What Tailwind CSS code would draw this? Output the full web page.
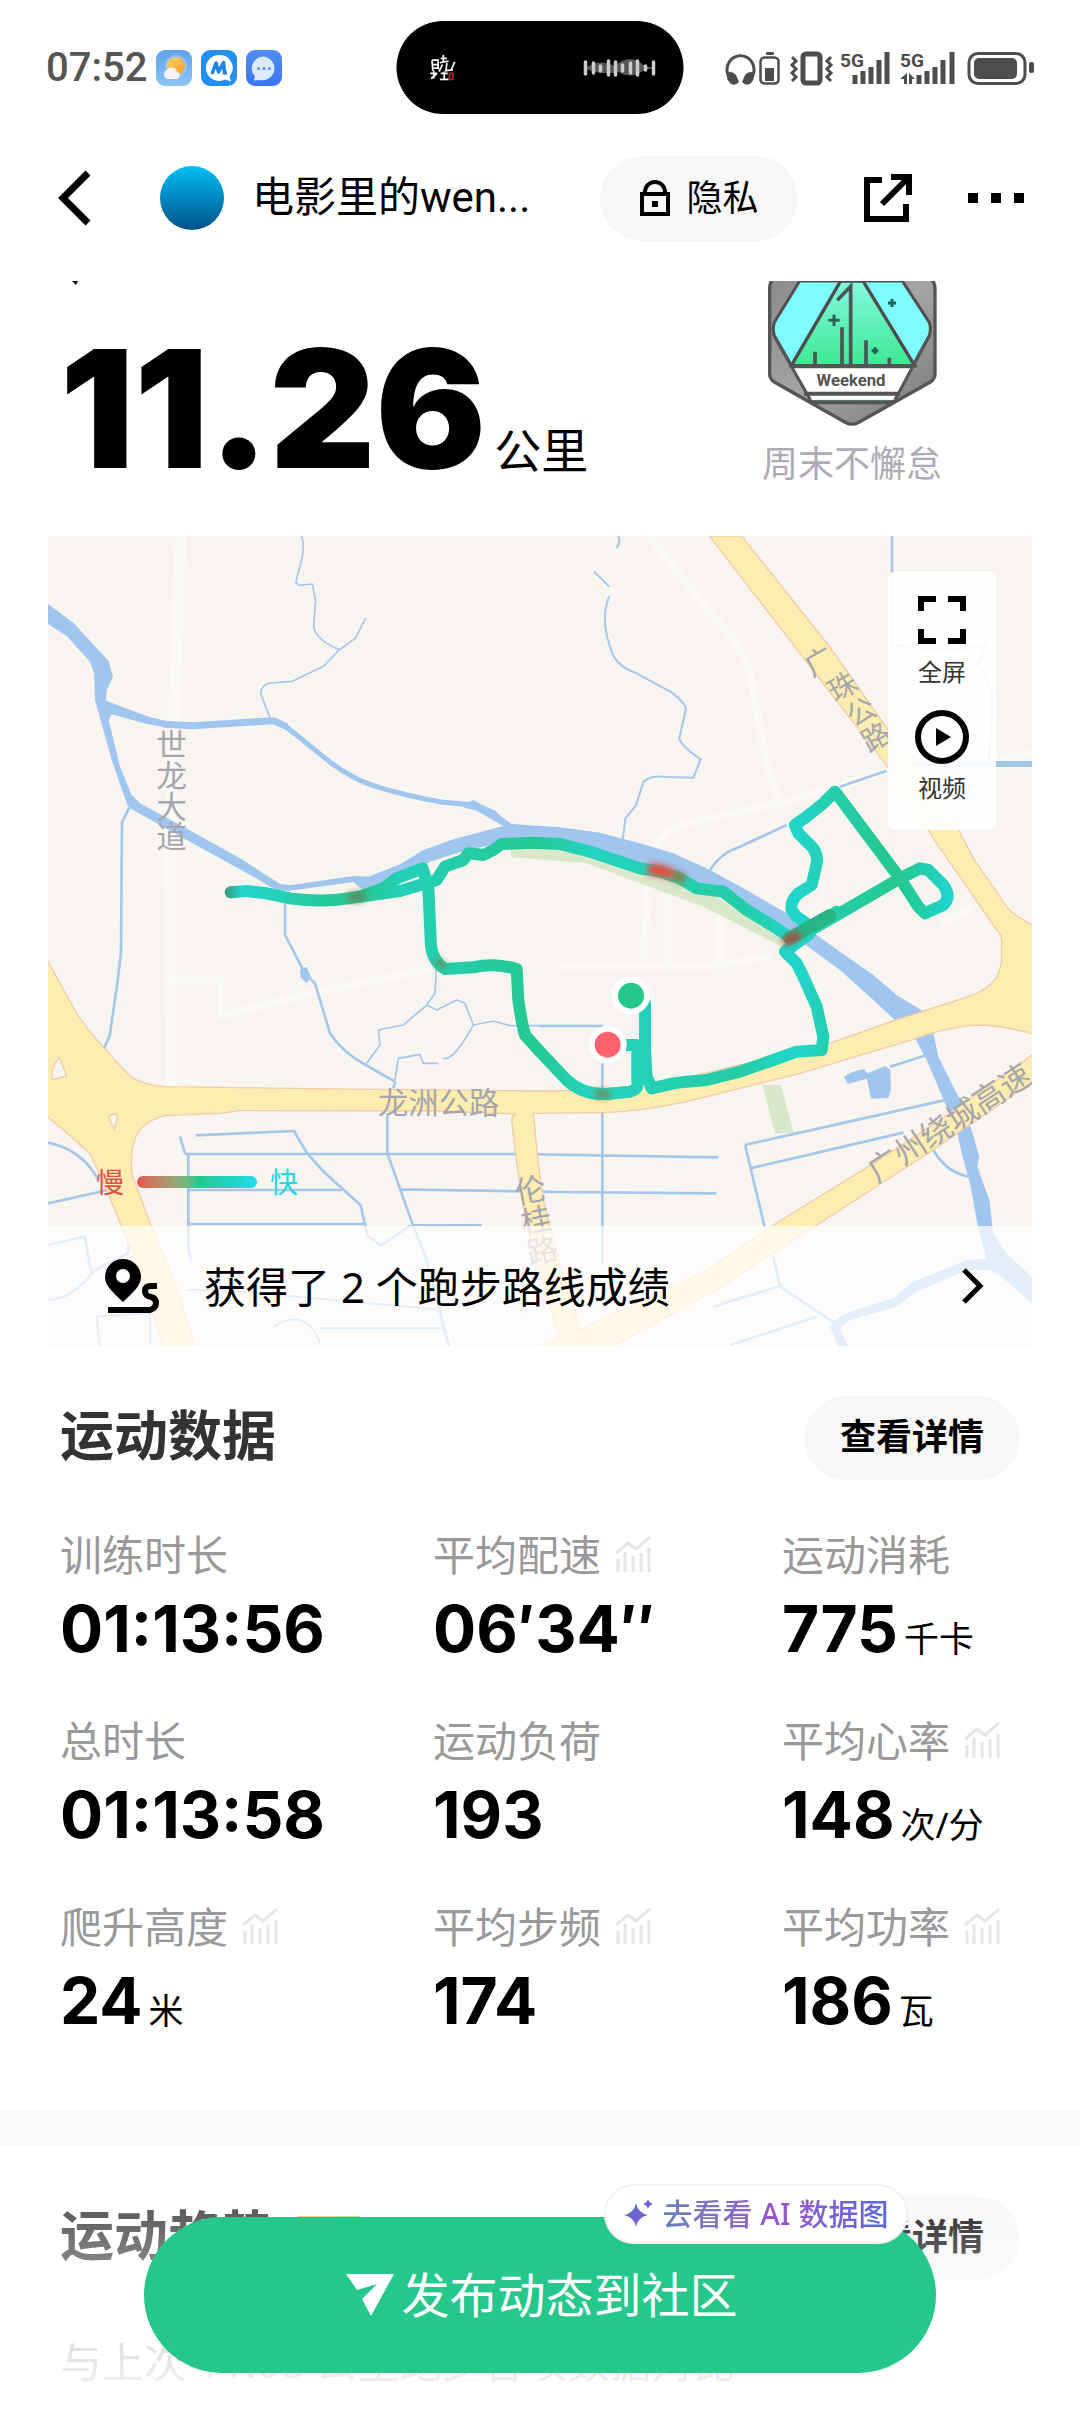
<!doctype html>
<html lang="zh-CN">

<head>
  <meta charset="UTF-8" />
  <meta name="viewport" content="width=device-width, initial-scale=1.0" />
  <title>运动数据</title>
  <script src="https://cdn.jsdelivr.net/npm/@tailwindcss/browser@4"></script>
</head>

<body class="bg-white text-black font-['Noto_Sans','Noto_Sans_CJK_SC',sans-serif]">
  <div class="relative flex h-screen flex-col overflow-hidden">

    <!-- Status bar -->
    <div class="relative flex h-[136px] shrink-0 items-center justify-between pr-[40px] pl-[46px]">
      <div class="flex items-center gap-[9px]">
        <span class="font-['Roboto'] text-[40px] leading-[48px] font-medium text-[#555]">07:52</span>
        <svg class="size-[36px]" viewBox="0 0 36 36">
          <defs>
            <linearGradient id="sky" x2="0" y2="1"><stop stop-color="#5fa3ec" /><stop offset="1" stop-color="#8cc4f7" /></linearGradient>
            <linearGradient id="sun" x2="1" y2="1"><stop stop-color="#ffd75e" /><stop offset="1" stop-color="#f79a2d" /></linearGradient>
          </defs>
          <rect width="36" height="36" rx="9" fill="url(#sky)" />
          <circle cx="20" cy="16" r="11" fill="#fff" opacity=".25" />
          <circle cx="20" cy="16" r="9" fill="url(#sun)" />
          <path d="M11 29a5 5 0 0 1-.5-9 6 6 0 0 1 10.500 1.500 4 4 0 0 1 .5 7.500z" fill="#f4f3f0" />
        </svg>
        <svg class="size-[36px]" viewBox="0 0 36 36">
          <rect width="36" height="36" rx="9" fill="#2490f5" />
          <path d="M18 5a13 13 0 1 0 6 24.500l6 2-1.500-5A13 13 0 0 0 18 5z" fill="#fff" />
          <path d="M11 24l4-11 2.500 9 5-9.500 1 10.500 2.500-.5" fill="none" stroke="#2383e2" stroke-width="3.500" stroke-linejoin="round" />
        </svg>
        <svg class="size-[36px]" viewBox="0 0 36 36">
          <defs><linearGradient id="sms" x2="0" y2="1"><stop stop-color="#4f8df5" /><stop offset="1" stop-color="#3a74f0" /></linearGradient></defs>
          <rect width="36" height="36" rx="9" fill="url(#sms)" />
          <path d="M18 6.500A12.500 12 0 1 1 13 30l-5.500.5 1.500-4A12.500 12 0 0 1 18 6.500z" fill="#dbeaff" />
          <circle cx="12.500" cy="18.500" r="1.500" fill="#5b8ff2" /><circle cx="18" cy="18.500" r="1.500" fill="#5b8ff2" /><circle cx="23.500" cy="18.500" r="1.500" fill="#5b8ff2" />
        </svg>
      </div>

      <div class="absolute top-[21px] left-1/2 flex h-[93px] w-[287px] -translate-x-1/2 items-center justify-between rounded-full bg-black pr-[27px] pl-[32px]">
        <svg class="h-[28px] w-[28px]" viewBox="0 0 32 32" fill="none" stroke="#fff" stroke-width="2">
          <path d="M4 7l1 12M4 7h7v10M5 12h5M6 16h5M14 5h7M17 1v9M13 10l10-2M16 12l-4 8M21 10l-1 9 8-1M30 9l-4 9M2 22h8M6 19v9M3 28l6-5M14 22h8M18 20v9M13 29h10" />
          <path d="M24 22h4v7h-4z" stroke="#a02828" />
        </svg>
        <svg class="h-[20px] w-[74px]" viewBox="0 0 74 20" stroke-linecap="round">
          <path d="M2 10Q18 0 32 8 48-6 62 8l10 2-10 2Q48 22 36 14 18 18 2 10z" fill="#555" />
          <path d="M3 4v12M11 5v10M18 8v5M26 3v14M33 4v13M40 7v6M48 5v10M55 3v14M63 8v4M71 4v12" stroke="#ccc" stroke-width="3.500" />
        </svg>
      </div>

      <svg class="h-[40px] w-[316px]" viewBox="0 0 316 40" fill="#4d4d4d" stroke="#4d4d4d">
        <g fill="none" stroke-width="3">
          <path d="M4 27a13.500 14 0 1 1 25 0" />
          <rect x="36.500" y="9.500" width="18" height="26" rx="4" stroke-width="2.500" />
          <rect x="79" y="6" width="17" height="29" rx="3" stroke-width="5" />
          <path d="M68 9l4 4-4 4 4 4-4 4 4 4-4 4M107 9l-4 4 4 4-4 4 4 4-4 4 4 4" stroke-width="3" />
          <rect x="245" y="5.500" width="56" height="30" rx="9" />
          <path d="M131 36v-9M139 36v-13M147 36v-17M155 36v-24M163 36v-32M195 36v-9M203 36v-13M211 36v-17M219 36v-24M228 36v-32" stroke-width="5" />
        </g>
        <g stroke="none">
          <path d="M3 25q5-3 9 2l3 7q-5 5-9 1-4-4-3-10zM30 25q-5-3-9 2l-3 7q5 5 9 1 4-4 3-10z" />
          <rect x="42" y="4" width="8" height="3" rx="1" /><rect x="41" y="20" width="9" height="13" />
          <rect x="250" y="10" width="43" height="21" rx="5" /><rect x="305" y="14" width="5" height="11" rx="2" />
          <path d="M176 31l7-6v11h-3v-5zM185 36v-11l6 6h-3v5z" />
          <text x="116" y="19" font-size="19" font-weight="700" class="font-['Roboto']">5G</text>
          <text x="176" y="19" font-size="19" font-weight="700" class="font-['Roboto']">5G</text>
        </g>
      </svg>
    </div>

    <!-- Title bar -->
    <header class="flex h-[145px] shrink-0 items-center pr-[56px] pb-[21px] pl-[56px]">
      <button aria-label="返回">
        <svg class="h-[56px] w-[36px]" viewBox="0 0 36 56" fill="none" stroke="#000" stroke-width="7"><path d="M32 3L7 28l25 25" /></svg>
      </button>
      <div class="ml-[68px] size-[64px] rounded-full bg-linear-to-b from-[#04c0f6] to-[#00528c]"></div>
      <div class="ml-[28px] font-['Roboto','Noto_Sans_CJK_SC'] text-[42px] leading-[56px]">电影里的wen...</div>
      <button class="ml-auto flex h-[85px] w-[198px] items-center justify-center gap-[15px] rounded-full bg-[#f7f7f7] text-[36px]">
        <svg class="h-[38px] w-[32px]" viewBox="0 0 32 38" fill="none" stroke="#000" stroke-width="4"><path d="M3 15h26v20H3zM6 15v-2a10 10 0 0 1 20 0v2" /><path d="M13 22h6v6h-6z" fill="#000" stroke="none" /></svg>
        隐私
      </button>
      <button class="ml-[66px]" aria-label="分享">
        <svg class="size-[48px]" viewBox="0 0 48 48" fill="none" stroke="#000" stroke-width="6"><path d="M18 6H3v39h39V30M27 3h18v18M44 4L18 30" /></svg>
      </button>
      <button class="ml-[56px] flex gap-[13px]" aria-label="更多">
        <i class="size-[10px] bg-black"></i><i class="size-[10px] bg-black"></i><i class="size-[10px] bg-black"></i>
      </button>
    </header>

    <main class="min-h-0 flex-1 overflow-hidden">
      <!-- Distance and badge -->
      <section class="relative flex h-[255px] justify-between pr-[138px] pl-[60px]">
        <svg class="absolute top-0 left-[72px] h-[4px] w-[6px]" viewBox="0 0 6 4"><path d="M0 0h6L4 4z" /></svg>
        <div class="flex items-baseline gap-[8px] pt-[28px]">
          <strong class="font-['Inter'] text-[164px] leading-[200px] font-black">11.26</strong>
          <span class="text-[47px] leading-[60px]">公里</span>
        </div>
        <figure class="flex flex-col items-center gap-[10px]">
          <svg class="h-[149px] w-[176px]" viewBox="73 36 528 447">
            <defs>
              <linearGradient id="steel" x2="1" y2="1"><stop stop-color="#8b8b8b" /><stop offset=".5" stop-color="#a5a5a5" /><stop offset="1" stop-color="#777" /></linearGradient>
              <linearGradient id="peak" x2="0" y2="1"><stop stop-color="#83f8e0" /><stop offset="1" stop-color="#3ee992" /></linearGradient>
            </defs>
            <path d="M90 60q0-30 20-35h450q26 5 26 35v255q0 15-14 24L355 461q-18 9-36 0L104 339q-14-9-14-24z" fill="url(#steel)" stroke="#555" stroke-width="10" />
            <path d="M180 36L104 160q-6 20 0 40l115 200h240l110-200q6-20 0-40L488 36z" fill="#7ffcff" stroke="#505050" stroke-width="9" />
            <path d="M303 36L155 290h370L370 36z" fill="url(#peak)" stroke="#4c4c4c" stroke-width="10" />
            <path d="M155 294h368l-58 98H214z" fill="#fff" />
            <path d="M155 292h370M193 374h288M214 400h250" stroke="#555" stroke-width="12" />
            <path d="M100 195L212 392M572 195L466 392" stroke="#555" stroke-width="9" />
            <path d="M226 290v-42M307 290V175M333 290V52L293 94M379 290v-76M449 290v-24" fill="none" stroke="#4c5553" stroke-width="11" />
            <path d="M283 137v34M266 154h34M457 90v24M445 102h24M406 235v20M396 245h20" stroke="#26645c" stroke-width="9" />
            <text x="334" y="351" font-size="50" font-weight="700" text-anchor="middle" fill="#555" class="font-['Roboto']">Weekend</text>
          </svg>
          <figcaption class="text-[36px] leading-[48px] text-[#aeabb6]">周末不懈怠</figcaption>
        </figure>
      </section>

      <!-- Route map -->
      <section class="relative mx-[48px] h-[810px] overflow-hidden bg-[#f8f5f0]">
        <svg class="absolute inset-0 size-full" viewBox="24 18 2952 2430" preserveAspectRatio="xMidYMid slice" fill="none">
          <defs>
            <linearGradient id="run" gradientUnits="userSpaceOnUse" x1="560" x2="2750" y1="0" y2="0">
              <stop stop-color="#3c9c80" /><stop offset=".02" stop-color="#22d5cf" /><stop offset=".1" stop-color="#25cda9" /><stop offset=".18" stop-color="#25c78c" /><stop offset=".24" stop-color="#24d0b9" /><stop offset=".42" stop-color="#25c992" /><stop offset=".5" stop-color="#24d3c0" /><stop offset=".7" stop-color="#25cda6" /><stop offset=".78" stop-color="#22d6cc" /><stop offset=".84" stop-color="#25cda8" /><stop offset=".92" stop-color="#25c78e" /><stop offset="1" stop-color="#21d7d5" />
            </linearGradient>
            <filter id="soft"><feGaussianBlur stdDeviation="9" /></filter>
          </defs>

          <!-- minor roads -->
          <g stroke="#fdfbf8" stroke-width="22" stroke-linejoin="round" stroke-opacity=".6">
            <path d="M422 18L390 900 395 1670" stroke-width="34" />
            <path d="M1830 20l190 240q90 90 110 170l50 270 40 120M2220 820l-280 60q-90 30-110 110l-20 300M2220 820l300-90 460-60M395 1347l150 0v110l280-70 350-70M1560 1310l240 0h200l190-30M1885 1100v210M2040 1150v150M2700 1180l100-50" />
          </g>
          <path d="M1413 955L1640 960 2000 1080 2250 1245 2225 1250 1990 1130 1640 1000 1413 982zM2168 1665h55l38 145h-56z" fill="#d9e8c8" />

          <!-- rivers -->
          <g fill="#a0c6ef">
            <path d="M24 222L100 278 205 392 219 440 200 480 198 512 330 562 390 575 390 594 320 582 215 553 206 570 240 710 275 795 300 820 430 890 600 985 720 1062 750 1066 940 1038 985 1040 1080 1003 1150 960 1240 928 1390 888 1310 842 1270 832 1270 822 1300 810 1360 842 1415 882 1560 892 1680 908 1800 940 1900 970 2010 1020 2110 1075 2240 1150 2330 1215 2400 1265 2500 1335 2570 1395 2652 1445 2570 1475 2500 1410 2400 1320 2290 1240 2200 1195 2100 1130 1980 1075 1840 1020 1700 970 1560 950 1400 935 1280 960 1170 995 1080 1060 980 1090 940 1056 750 1082 710 1082 640 1040 450 935 275 838 262 825 215 690 165 510 162 430 150 395 80 318 24 282z" />
            <path d="M2412 1640q30-20 60-22l10 12 54-22 15 12 2 60-8 24-52 2-12-60-58 16z" />
            <path d="M2620 1515L2680 1510 2695 1580 2770 1730 2795 1800 2818 1880 2812 1910 2848 2010 2860 2110 2900 2170 2980 2245V2325L2890 2245 2840 2210 2835 2170 2812 2080 2790 1960 2765 1870 2750 1800 2720 1730 2660 1590z" />
            <path d="M2370 2390Q2390 2360 2430 2345L2560 2305 2620 2255 2780 2190 2850 2185 2850 2220 2780 2220 2630 2285 2570 2330 2430 2370 2400 2395 2425 2450H2395z" />
            <path d="M780 1318l20-8 12 30-12 20-18-18z" />
          </g>
          <path d="M370 583l90 4 240-15 40 18" stroke="#a0c6ef" stroke-width="21" stroke-linejoin="round" />
          <path d="M732 585l143 115q60 45 125 67 100 32 210 50l90 8 60 22 45 45" stroke="#a0c6ef" stroke-width="15" />
          <g stroke="#a5c7e9" stroke-width="8" stroke-linejoin="round">
            <path d="M785 18q10 30 0 70l-18 70 12 8 38-4 10 50-6 80q10 40 78 67l48-35 30-60M897 360l-45 48-95 46-68 5q-30 10-26 35l28 72" stroke-width="5" />
            <path d="M268 832l-22 45-3 390-12 100-22 150-18 40M735 1120v95l60 115 30 30 45 150q40 60 107 95l88 50-5 20M1042 1750v120l75 210 40 100 70 270M24 1838q100 20 150 110M24 2020l180-40M445 1870v280l8 40M435 1870l-15-50M435 1872h990l610 10M445 1980l460 0M1080 1978l480 8 470 4M445 2082h535M1115 2085l210 1M467 1816l295-13 40 68 50 55 110 100 20 90 40 30 90-60M1687 1600v600M1500 1488h190" />
            <path d="M980 1600l40-55-5-45 75-15 70-60 25-35 5-90M1160 1425l30 15 60-30 25 10 25 65q-60 110-90 100M1300 1485l60-12 50 14h240M1065 1650l10-65 65-12 10 27h45" stroke-width="5" />
            <path d="M1735 18q8 22-6 36M1662 124l46 46M1708 198q-30 70 8 170 14 40 70 60l110 60q40 30 42 50l-20 85q0 20 64 65l-22 55-80-2q-50-6-70 15l-22 70-32 40-8 65" stroke-width="6" />
            <path d="M2010 1020q30-50 90-70l140-65M2400 770l140-48M2556 18v325q200 30 285 0l-30 60q50 60 46 120l-10 170" />
            <path d="M2620 702h360" stroke-width="18" />
            <path d="M2115 1845l610-137M2130 1915l460-107M2115 1845l60 250M2550 1610l110-35M2680 1860q40 70 110 80M24 2145l110-25 20 105M24 2310q70 0 140-90l100-50 5-90M2200 2180l20 90 180 120M2020 2330l210-65M2070 2445l260-85" />
            <path d="M440 2280h110l660 60M700 2390q100-60 140 50M840 2395h370M180 2450l-10-90 160-10v90" stroke-width="6" />
          </g>

          <!-- highways -->
          <g fill="#fdedb0" stroke="#f3cbaa" stroke-width="4">
            <path d="M2008 18h97l260 327 180 255 195 270 60 115 100 145q30 35 90 60v325q-120-35-200-28-90 10-170 41l-340 102-340 85q-140 30-250 33l-210 2 15 150 15 110 35 140 75 250-55 45-75-245-35-140-25-160-15-130q0-10 10-18l-235-9-590-1-60 8-170 7q-60 20-80 58-20 40-15 115l55 150 80 190 55 180h-95l-80-250-90-220-50-110-80-70-60-50V1270l100 180q40 60 80 100 60 70 90 95 40 20 90 25l630 8 500 5q240 0 440-40l420-100 190-67 240-78q90-30 95-110V1230q0-15-15-30l-180-260-140-220z" />
            <path d="M2980 1572L2700 1770 2500 1900 2200 2085 2000 2220 1620 2400 1480 2455h225L2030 2280 2330 2085 2680 1860 2980 1653z" />
            <path d="M58 1582l22 56-44 12q-4-36 22-68zM206 1758q12-8 26-4l-2 18-8 28z" fill="#f8f5f0" />
          </g>

          <!-- road names -->
          <g font-size="86" fill="#a6a6ac" class="font-['Noto_Sans_CJK_SC']">
            <text x="395" y="598" font-size="92" class="[writing-mode:vertical-rl]">世龙大道</text>
            <text x="1014" y="1752" font-size="91">龙洲公路</text>
            <text transform="translate(2316 443) rotate(-30)">广</text>
            <text transform="translate(2386 518) rotate(-30)">珠</text>
            <text transform="translate(2441 593) rotate(-30)">公</text>
            <text transform="translate(2486 670) rotate(-30)">路</text>
            <text transform="translate(1462 1934) rotate(-11)" font-size="92" class="[writing-mode:vertical-rl]">伦桂路</text>
            <text transform="translate(2510 1960) rotate(-33)" font-size="94">广州绕城高速</text>
          </g>

          <!-- track -->
          <g stroke="url(#run)" stroke-width="36" stroke-linejoin="round" stroke-linecap="round">
            <path d="M572 1087l48-4 60 7 70 15q100 14 190-2l140-20 110-33 25-40 55-20 15-20 45 5 30-15 25-18 95-4 80 4 90 23 60 20 90 30 60 10 60 20 50 30 80 10 70 55 90 55 50 35 140-80 180-105 60-30 25 5 45 45q25 35 0 60l-55 25-20-20-55-85-195-260-35 35-50 40-35 25 10 25 45 45q15 25 10 45l-15 65-40 25q-25 25-20 50l15 20 50 35 70-50" />
            <path d="M960 1100l70-25 40-30 78-30 17 60 7 155q0 60 43 87l85-5q60-15 130 5l5 93q10 70 20 105l45 50 80 85q50 46 120 42l70-7q22-6 22-20v-120h-60" />
            <path d="M2310 1210l-75 55 35 35 20 40 40 90 20 90-5 40-75 5-70 25-100 35-100 25-60 5-40 5-65 15-15-35-5-80v-140l-30-30" />
          </g>
          <path d="M2250 1225l70-40 50-28" stroke="#29b586" stroke-width="40" stroke-linecap="round" />
          <g filter="url(#soft)">
            <path d="M1825 1016l45 8 25 8" stroke="#f04840" stroke-width="34" />
            <path d="M1895 1032l40 16" stroke="#8b7a50" stroke-width="30" />
            <path d="M2230 1238l50-26" stroke="#b4483c" stroke-width="26" />
            <path d="M925 1104l50-6" stroke="#5a8a60" stroke-width="28" />
            <path d="M1665 1692h45" stroke="#6a8f60" stroke-width="26" />
            <path d="M1190 1290l24 24" stroke="#5a9a60" stroke-width="22" />
          </g>

          <circle cx="1773" cy="1397" r="48" fill="#26c78b" stroke="#fff" stroke-width="18" />
          <circle cx="1703" cy="1544" r="48" fill="#ff626c" stroke="#fff" stroke-width="18" />
        </svg>

        <div class="absolute top-[36px] right-[36px] flex h-[258px] w-[108px] flex-col items-center rounded-md bg-white/90 pt-[24px] text-[24px] leading-[32px] text-[#333]">
          <button class="flex flex-col items-center gap-[12px]">
            <svg class="size-[48px]" viewBox="0 0 48 48" fill="none" stroke="#000" stroke-width="6"><path d="M3 15V3h15M30 3h15v12M45 33v12H30M18 45H3V33" /></svg>
            全屏
          </button>
          <button class="mt-[22px] flex flex-col items-center gap-[8px]">
            <svg class="size-[54px]" viewBox="0 0 54 54"><circle cx="27" cy="27" r="24" fill="none" stroke="#000" stroke-width="6" /><path d="M21 18l15 9-15 9z" /></svg>
            视频
          </button>
        </div>

        <div class="absolute bottom-[144px] left-[48px] flex items-center gap-[13px] text-[28px] leading-[40px]">
          <span class="text-[#dd5148]">慢</span>
          <i class="h-[12px] w-[120px] rounded-full bg-linear-to-r from-[#e05650] via-[#26c78b] to-[#22dcf0]"></i>
          <span class="text-[#22d8e6]">快</span>
        </div>

        <button class="absolute inset-x-0 bottom-0 flex h-[120px] items-center bg-white/70 pr-[47px] pl-[57px] text-[42px]">
          <svg class="h-[54px] w-[54px]" viewBox="0 0 54 54">
            <path fill-rule="evenodd" d="M18 0a18 18 0 0 1 18 18c0 9-8 15-18 25C8 33 0 27 0 18A18 18 0 0 1 18 0zm0 10a7 7 0 1 0 0 14 7 7 0 0 0 0-14z" />
            <path d="M52 27h-6q-6 0-6 5t6 6q5 1 5 6t-6 7H3" fill="none" stroke="#000" stroke-width="6" />
          </svg>
          <span class="ml-[45px]">获得了 2 个跑步路线成绩</span>
          <svg class="ml-auto h-[36px] w-[24px]" viewBox="0 0 24 36" fill="none" stroke="#000" stroke-width="5"><path d="M3 2l16 16L3 34" /></svg>
        </button>
      </section>

      <!-- Workout data -->
      <section class="px-[60px]">
        <div class="flex items-center justify-between pt-[50px]">
          <h2 class="pb-[6px] text-[54px] leading-[76px] font-bold text-[#333]">运动数据</h2>
          <button class="h-[84px] w-[216px] rounded-full bg-[#f7f7f7] pb-[2px] text-[36px] font-bold">查看详情</button>
        </div>
        <dl class="grid h-[630px] grid-cols-[373px_349px_1fr] grid-rows-[186px_186px_186px] pt-[47px]">
          <div>
            <dt class="flex h-[60px] items-center gap-[14px] pb-[6px] text-[42px] text-[#999]">训练时长</dt>
            <dd class="flex h-[84px] items-baseline gap-[6px]"><strong class="font-['Inter'] text-[64px] leading-[84px] font-bold">01:13:56</strong></dd>
          </div>
          <div>
            <dt class="flex h-[60px] items-center gap-[14px] pb-[6px] text-[42px] text-[#999]">平均配速 <svg class="size-[36px]"><use href="#trend" /></svg></dt>
            <dd class="flex h-[84px] items-baseline gap-[6px]"><strong class="font-['Inter'] text-[64px] leading-[84px] font-bold">06′34″</strong></dd>
          </div>
          <div>
            <dt class="flex h-[60px] items-center gap-[14px] pb-[6px] text-[42px] text-[#999]">运动消耗</dt>
            <dd class="flex h-[84px] items-baseline gap-[6px]"><strong class="font-['Inter'] text-[64px] leading-[84px] font-bold">775</strong><span class="text-[35px]">千卡</span></dd>
          </div>
          <div>
            <dt class="flex h-[60px] items-center gap-[14px] pb-[6px] text-[42px] text-[#999]">总时长</dt>
            <dd class="flex h-[84px] items-baseline gap-[6px]"><strong class="font-['Inter'] text-[64px] leading-[84px] font-bold">01:13:58</strong></dd>
          </div>
          <div>
            <dt class="flex h-[60px] items-center gap-[14px] pb-[6px] text-[42px] text-[#999]">运动负荷</dt>
            <dd class="flex h-[84px] items-baseline gap-[6px]"><strong class="font-['Inter'] text-[64px] leading-[84px] font-bold">193</strong></dd>
          </div>
          <div>
            <dt class="flex h-[60px] items-center gap-[14px] pb-[6px] text-[42px] text-[#999]">平均心率 <svg class="size-[36px]"><use href="#trend" /></svg></dt>
            <dd class="flex h-[84px] items-baseline gap-[6px]"><strong class="font-['Inter'] text-[64px] leading-[84px] font-bold">148</strong><span class="text-[35px]">次/分</span></dd>
          </div>
          <div>
            <dt class="flex h-[60px] items-center gap-[14px] pb-[6px] text-[42px] text-[#999]">爬升高度 <svg class="size-[36px]"><use href="#trend" /></svg></dt>
            <dd class="flex h-[84px] items-baseline gap-[6px]"><strong class="font-['Inter'] text-[64px] leading-[84px] font-bold">24</strong><span class="text-[35px]">米</span></dd>
          </div>
          <div>
            <dt class="flex h-[60px] items-center gap-[14px] pb-[6px] text-[42px] text-[#999]">平均步频 <svg class="size-[36px]"><use href="#trend" /></svg></dt>
            <dd class="flex h-[84px] items-baseline gap-[6px]"><strong class="font-['Inter'] text-[64px] leading-[84px] font-bold">174</strong></dd>
          </div>
          <div>
            <dt class="flex h-[60px] items-center gap-[14px] pb-[6px] text-[42px] text-[#999]">平均功率 <svg class="size-[36px]"><use href="#trend" /></svg></dt>
            <dd class="flex h-[84px] items-baseline gap-[6px]"><strong class="font-['Inter'] text-[64px] leading-[84px] font-bold">186</strong><span class="text-[35px]">瓦</span></dd>
          </div>
        </dl>
      </section>

      <div class="h-[36px] bg-[#fafafa]"></div>

      <!-- Trends -->
      <section class="px-[60px]">
        <div class="flex items-center pt-[50px]">
          <h2 class="pb-[6px] text-[54px] leading-[76px] font-bold text-[#333]">运动趋势</h2>
          <i class="ml-[20px] h-[44px] w-[66px] rounded bg-linear-to-r from-[#ffb84d] to-[#8fdc70]"></i>
          <button class="ml-auto h-[84px] w-[216px] rounded-full bg-[#f7f7f7] pb-[2px] text-[36px] font-bold">查看详情</button>
        </div>
        <p class="mt-[52px] text-[42px] leading-[60px] text-[#999]">与上次 11.08 公里跑步各项数据对比</p>
      </section>
    </main>

    <!-- Publish bar -->
    <div class="absolute inset-x-0 bottom-0 h-[230px] bg-linear-to-t from-white/95 to-white/10 px-[144px] pt-[35px]">
      <div class="relative">
        <button class="flex h-[156px] w-full items-center justify-center gap-[7px] rounded-full bg-[#26c78b] pl-[4px] text-[48px] text-white">
          <svg class="h-[42px] w-[48px]" viewBox="0 0 48 42" fill="#fff"><path d="M0 0h48L25 42l-9-17 15-15-20 6z" /></svg>
          发布动态到社区
        </button>
        <button class="absolute -top-[33px] right-[28px] flex h-[60px] w-[304px] items-center justify-center gap-[9px] rounded-full border-2 border-[#f3f3f3] bg-white pb-[2px] text-[30px] font-medium">
          <svg class="h-[28px] w-[30px]" viewBox="0 0 30 28">
            <defs><linearGradient id="ai" x2="1" y2="1"><stop stop-color="#58a" /><stop offset=".5" stop-color="#6a62d0" /><stop offset="1" stop-color="#a55fd6" /></linearGradient></defs>
            <path d="M12 4q2 10 12 12-10 2-12 12-2-10-12-12 10-2 12-12zM24 0q1 4 5 5-4 1-5 5-1-4-5-5 4-1 5-5z" fill="url(#ai)" />
          </svg>
          <span class="bg-linear-to-r from-[#6683b5] via-[#9a55cf] via-50% to-[#5566df] bg-clip-text text-transparent">去看看 AI 数据图</span>
        </button>
      </div>
    </div>
  </div>

  <svg class="hidden">
    <symbol id="trend" viewBox="0 0 36 36">
      <path d="M1 17l12-10 8 6L35 1M3 36V23M10 36V16M18 36V20M26 36V17M34 36V12" fill="none" stroke="#e6e6e6" stroke-width="3" />
    </symbol>
  </svg>
</body>

</html>
